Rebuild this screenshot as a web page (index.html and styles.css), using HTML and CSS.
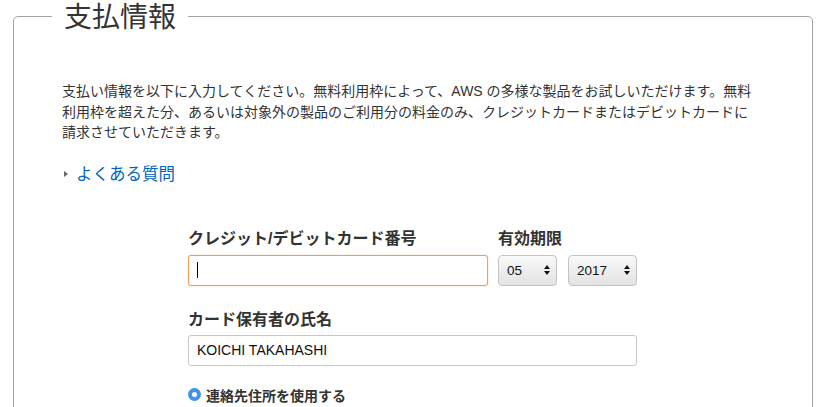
FILE: index.html
```html
<!DOCTYPE html>
<html lang="ja">
<head>
<meta charset="utf-8">
<title>支払情報</title>
<link rel="stylesheet" href="styles.css">
</head>
<body>
<fieldset class="panel">
  <legend class="panel-title">支払情報</legend>
  <p class="intro">支払い情報を以下に入力してください。無料利用枠によって、AWS の多様な製品をお試しいただけます。無料利用枠を超えた分、あるいは対象外の製品のご利用分の料金のみ、クレジットカードまたはデビットカードに請求させていただきます。</p>
  <div class="faq"><span class="faq-arrow"></span><a class="faq-link" href="#">よくある質問</a></div>

  <form class="card-form">
    <div class="row">
      <div class="field field-card">
        <div class="label">クレジット/デビットカード番号</div>
        <div class="input input-focus"><span class="caret"></span></div>
      </div>
      <div class="field field-exp">
        <div class="label">有効期限</div>
        <div class="selects">
          <div class="select select-month"><span>05</span>
            <svg class="updown" width="6" height="10" viewBox="0 0 6 10"><path d="M3 0 L6 4 L0 4 Z M0 6 L6 6 L3 10 Z" fill="#111"/></svg>
          </div>
          <div class="select select-year"><span>2017</span>
            <svg class="updown" width="6" height="10" viewBox="0 0 6 10"><path d="M3 0 L6 4 L0 4 Z M0 6 L6 6 L3 10 Z" fill="#111"/></svg>
          </div>
        </div>
      </div>
    </div>

    <div class="field field-name">
      <div class="label">カード保有者の氏名</div>
      <div class="input">KOICHI TAKAHASHI</div>
    </div>

    <div class="radio-row">
      <span class="radio"><span class="radio-dot"></span></span>
      <span class="radio-label">連絡先住所を使用する</span>
    </div>
  </form>
</fieldset>
</body>
</html>
```
FILE: styles.css
```css
html, body {
  margin: 0;
  padding: 0;
  background: #fff;
}
body {
  font-family: "Liberation Sans", "Noto Sans CJK JP", sans-serif;
  color: #333;
  overflow: hidden;
  height: 407px;
}
.panel {
  margin: 0 9px 0 13px;
  padding: 0 0 40px 0;
  border: 1px solid #a2a2a2;
  border-radius: 5px;
  min-width: 0;
}
.panel-title {
  margin-left: 38px;
  padding: 4px 12px 0 12px;
  font-size: 28px;
  line-height: 28px;
  color: #333;
  font-weight: normal;
}
.intro {
  margin: 49px 0 0 48px;
  width: 696px;
  font-size: 14px;
  line-height: 20.5px;
  color: #333;
}
.faq {
  margin: 21px 0 0 50px;
  display: flex;
  align-items: center;
  height: 20px;
}
.faq-arrow {
  width: 0;
  height: 0;
  border-left: 4px solid #666;
  border-top: 3.5px solid transparent;
  border-bottom: 3.5px solid transparent;
  margin-right: 8px;
}
.faq-link {
  color: #0066c0;
  font-size: 16.5px;
  line-height: 20px;
  text-decoration: none;
}
.card-form {
  width: 449px;
  margin: 45px 0 0 174px;
}
.row {
  display: flex;
  gap: 10px;
}
.field-card {
  width: 300px;
}
.label {
  font-size: 16px;
  line-height: 20px;
  font-weight: bold;
  color: #333;
  margin-bottom: 6px;
}
.input {
  box-sizing: border-box;
  height: 31px;
  border: 1px solid #c8c8c8;
  border-radius: 3px;
  padding: 0 8px;
  display: flex;
  align-items: center;
  font-size: 14px;
  color: #111;
  background: #fff;
}
.input-focus {
  border-color: #e9a15c;
  box-shadow: 0 0 2px rgba(228, 121, 17, 0.35);
}
.caret {
  display: block;
  width: 1px;
  height: 16px;
  background: #000;
}
.selects {
  display: flex;
  gap: 11px;
}
.select {
  box-sizing: border-box;
  height: 31px;
  border: 1px solid #c4c4c4;
  border-radius: 4px;
  background: linear-gradient(#f9f9f9, #e3e3e3);
  display: flex;
  align-items: center;
  justify-content: space-between;
  padding: 0 6px 0 8px;
  font-size: 13.5px;
  color: #111;
}
.select-month { width: 59px; }
.select-year { width: 69px; }
.field-name {
  margin-top: 24px;
}
.field-name .label {
  margin-bottom: 5px;
}
.radio-row {
  margin-top: 19px;
  display: flex;
  align-items: center;
  height: 20px;
}
.radio {
  box-sizing: border-box;
  width: 13px;
  height: 13px;
  border-radius: 50%;
  background: #3f93e8;
  display: flex;
  align-items: center;
  justify-content: center;
  margin-right: 5px;
}
.radio-dot {
  width: 5px;
  height: 5px;
  border-radius: 50%;
  background: #fff;
}
.radio-label {
  font-size: 14px;
  font-weight: bold;
  color: #333;
}
```
